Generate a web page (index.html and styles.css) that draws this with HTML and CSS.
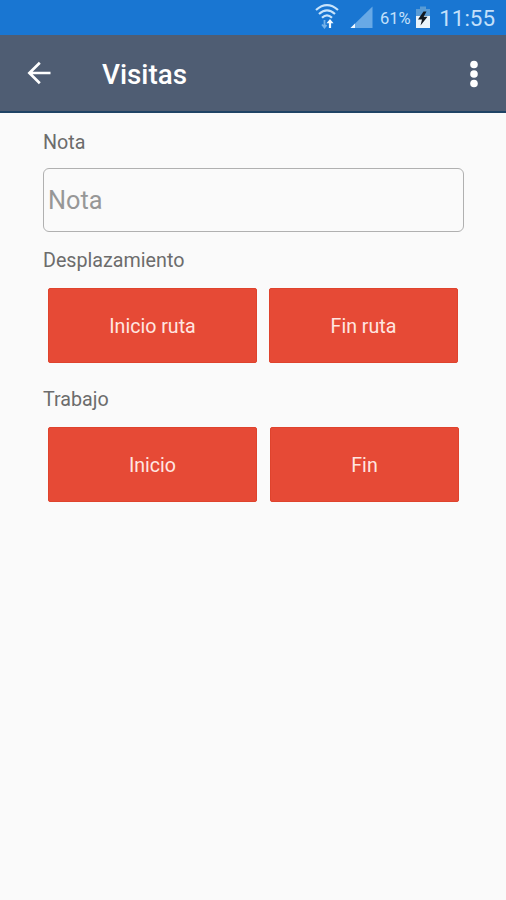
FILE: index.html
```html
<!DOCTYPE html>
<html lang="es">
<head>
<meta charset="utf-8">
<title>Visitas</title>
<link rel="stylesheet" href="styles.css">
</head>
<body>
<div class="status">
  <svg class="wifi" width="24" height="26" viewBox="0 0 24 26" fill="none" stroke="#c9e4fb" stroke-width="2.2">
    <path d="M1 6Q12 -3.600 23 6M4 10Q12 2.600 20 10M7 13.800Q12 8.800 17 13.800"/>
    <path d="M15 24V18" stroke="#f3faff"/>
    <path d="M11.500 19.200L15 15L18.500 19.200Z" fill="#f3faff" stroke="none"/>
    <path d="M9.500 16V22M7 20.500L9.500 23.500L11.500 21" stroke="#76b2e9" stroke-width="1.800"/>
  </svg>
  <svg class="signal" width="23" height="23" viewBox="0 0 23 23">
    <path d="M0.500 22L22.500 0.500V22Z" fill="#68a9e6"/>
    <path d="M0.500 22L5 17.600V22Z" fill="#f0f8ff"/>
  </svg>
  <span class="percent">61%</span>
  <svg class="battery" width="16" height="23" viewBox="0 0 16 23">
    <path d="M5 0.500H11V3H15V10H1V3H5Z" fill="#599bd5"/>
    <path d="M1 10H15V22H1Z" fill="#eaf4fb"/>
    <path d="M8.500 5.500L3 13.500H7L5.500 19.500L12.500 10.800H8.700L11.500 5.500Z" fill="#101820"/>
  </svg>
  <span class="clock">11:55</span>
</div>
<header class="bar">
  <svg class="back" width="24" height="24" viewBox="0 0 24 24" fill="none" stroke="#fff" stroke-width="2.700">
    <path d="M23.500 12H3M12.800 1.800L2.400 12L12.800 22.200"/>
  </svg>
  <h1 class="title">Visitas</h1>
  <svg class="more" width="8" height="28" viewBox="0 0 8 28" fill="#fff">
    <circle cx="4" cy="4.500" r="3.800"/><circle cx="4" cy="14" r="3.800"/><circle cx="4" cy="23.500" r="3.800"/>
  </svg>
</header>
<main class="form">
  <label class="label" for="nota">Nota</label>
  <input class="field" id="nota" type="text" placeholder="Nota">
  <h2 class="label">Desplazamiento</h2>
  <div class="actions">
    <button class="action">Inicio ruta</button>
    <button class="action">Fin ruta</button>
  </div>
  <h2 class="label">Trabajo</h2>
  <div class="actions work">
    <button class="action">Inicio</button>
    <button class="action">Fin</button>
  </div>
</main>
</body>
</html>
```
FILE: styles.css
```css
* { box-sizing: border-box; }
body {
  margin: 0;
  min-height: 900px;
  background: #fafafa;
  font-family: Roboto, "Liberation Sans", sans-serif;
}
.status {
  display: flex;
  align-items: center;
  height: 35px;
  padding: 0 11px 0 315px;
  background: #1976d2;
  color: #c4e0fa;
}
.wifi { flex: none; margin-top: -1px; }
.signal { flex: none; margin-left: 11px; }
.percent { width: 32px; margin: 2px 0 0 7px; font-size: 16.5px; white-space: nowrap; }
.battery { flex: none; margin-left: 3px; }
.clock { margin: 0 0 0 auto; font-size: 22.4px; white-space: nowrap; }
.bar {
  display: flex;
  align-items: center;
  height: 78px;
  padding: 0 28px 0 27px;
  border-bottom: 2px solid #1f4365;
  background: #4f5d73;
  color: #fff;
}
.title { margin: 3px 0 0 51px; font-size: 27.8px; font-weight: 500; line-height: 32px; }
.more { margin: 2px 0 0 auto; }
.form { padding: 17px 42px 0 43px; }
.label {
  display: block;
  margin: 0;
  padding-top: 1px;
  color: #6c6c6c;
  font-size: 19.7px;
  font-weight: 400;
  line-height: 24px;
}
.field {
  display: block;
  width: 100%;
  height: 64px;
  margin: 13px 0 16px;
  padding: 1px 5px 0 4px;
  border: 1px solid #b0b0b0;
  border-radius: 6px;
  background: transparent;
  color: #555;
  font: 25.3px Roboto, "Liberation Sans", sans-serif;
}
.field::placeholder { color: #979797; opacity: 1; }
.actions {
  display: grid;
  grid-template-columns: 209px 189px;
  column-gap: 12px;
  margin: 15px 0 24px 5px;
}
.work { column-gap: 13px; }
.action {
  height: 75px;
  padding: 2px 0 0;
  border: 1px solid #df432d;
  border-radius: 2px;
  background: #e64a36;
  color: #ffe6e1;
  font: 19.6px Roboto, "Liberation Sans", sans-serif;
}
```
